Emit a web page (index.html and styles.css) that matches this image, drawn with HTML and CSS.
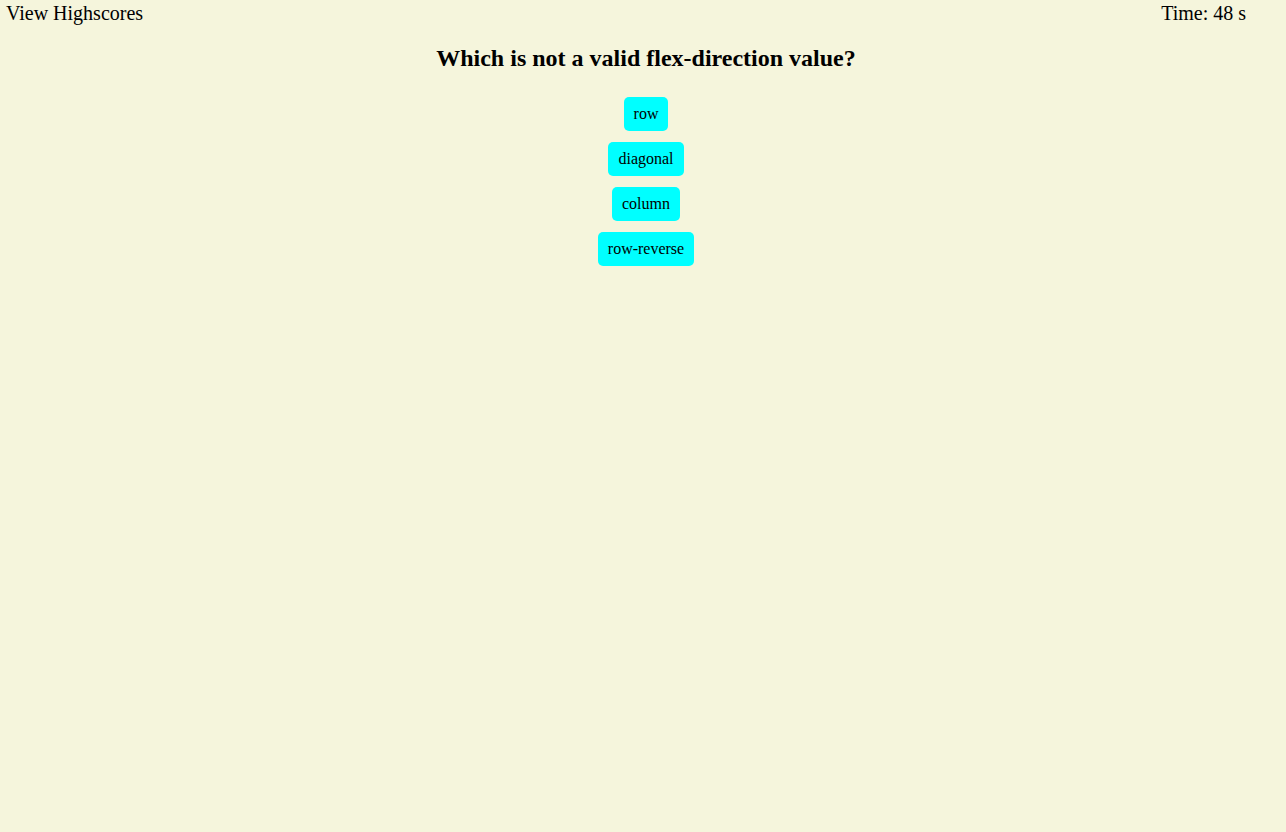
FILE: index.html
```html
<!DOCTYPE html>
<html>
<head>
<meta charset="utf-8">
<link rel="stylesheet" href="styles.css">
</head>
<body>
<header class="top-bar">
  <span class="highscores">View Highscores</span>
  <span class="timer">Time: 48 s</span>
</header>
<main class="quiz">
  <h2 class="question">Which is not a valid flex-direction value?</h2>
  <div class="answers">
    <button class="answer">row</button>
    <button class="answer">diagonal</button>
    <button class="answer">column</button>
    <button class="answer">row-reverse</button>
  </div>
</main>
</body>
</html>
```
FILE: styles.css
```css
html, body {
  background: #f5f5dc;
}
body {
  margin: 0;
  font-family: "Liberation Serif", "Times New Roman", serif;
  color: #000;
}
.top-bar {
  display: flex;
  justify-content: space-between;
  padding: 2px 40px 0 6px;
  font-size: 20px;
}
.quiz {
  display: flex;
  flex-direction: column;
  align-items: center;
  padding-left: 6px;
}
.question {
  font-size: 24px;
  font-weight: bold;
  margin: 20px 0 25px;
}
.answers {
  display: flex;
  flex-direction: column;
  align-items: center;
  gap: 11px;
}
.answer {
  font-family: "Liberation Serif", "Times New Roman", serif;
  font-size: 16px;
  line-height: 18px;
  background: #00ffff;
  border: none;
  border-radius: 5px;
  padding: 8px 10px;
  color: #000;
}
```
